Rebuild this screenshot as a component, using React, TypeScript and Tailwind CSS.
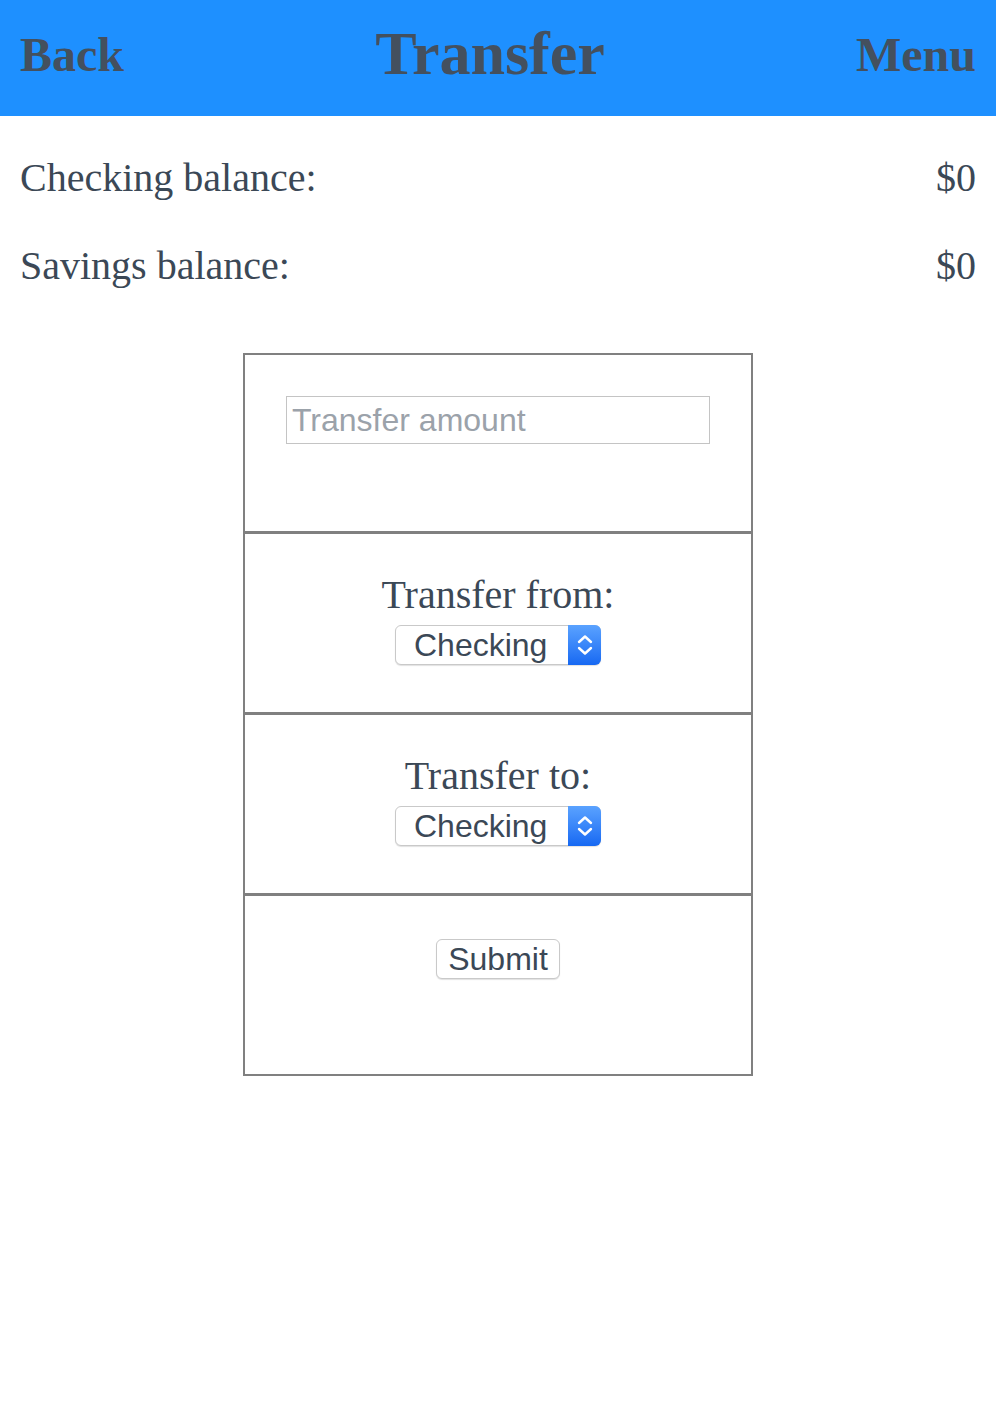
import React from "react";

function Chevrons() {
  return (
    <svg width="18" height="30" viewBox="0 0 18 30" fill="none">
      <path d="M3 12 L9 6.5 L15 12" stroke="white" strokeWidth="2.4" strokeLinecap="round" strokeLinejoin="round" />
      <path d="M3 18 L9 23.5 L15 18" stroke="white" strokeWidth="2.4" strokeLinecap="round" strokeLinejoin="round" />
    </svg>
  );
}

function MacSelect() {
  return (
    <div className="relative mx-auto h-[40px] w-[206px] rounded-[6px] border border-[#c9c9c9] bg-white shadow-[0_1px_1px_rgba(0,0,0,0.12)]">
      <select
        defaultValue="checking"
        className="h-full w-full appearance-none bg-transparent pl-[18px] pr-[36px] text-[32px] leading-[38px] text-[#3b4856] outline-none"
        style={{ fontFamily: '"Liberation Sans", Arial, sans-serif' }}
      >
        <option value="checking">Checking</option>
        <option value="savings">Savings</option>
      </select>
      <div className="pointer-events-none absolute right-[-1px] top-[-1px] flex h-[40px] w-[33px] items-center justify-center rounded-r-[6px] bg-gradient-to-b from-[#5aa2ff] to-[#1668f2]">
        <Chevrons />
      </div>
    </div>
  );
}

export default function App() {
  const serif = { fontFamily: '"Liberation Serif", "Times New Roman", serif' };
  const sans = { fontFamily: '"Liberation Sans", Arial, sans-serif' };
  return (
    <div className="min-h-[1402px] w-full bg-white text-[#3b4856]" style={serif}>
      <header className="flex h-[116px] items-center justify-between bg-[#1e90ff] px-[20px] text-[#44505e]">
        <span className="mt-[-7px] text-[48px] font-bold leading-[53px]">Back</span>
        <span className="mt-[-10px] text-[62px] font-bold leading-[68px]">Transfer</span>
        <span className="mt-[-7px] text-[48px] font-bold leading-[53px]">Menu</span>
      </header>

      <div className="flex flex-col gap-[42px] px-[20px] pt-[39px] text-[40px] leading-[46px]">
        <div className="flex justify-between">
          <span>Checking balance:</span>
          <span>$0</span>
        </div>
        <div className="flex justify-between">
          <span>Savings balance:</span>
          <span>$0</span>
        </div>
      </div>

      <div className="mx-auto mt-[64px] w-[510px] divide-y-[3px] divide-[#808080] border-2 border-[#808080]">
        <section className="h-[179px] pt-[41px]">
          <input
            type="text"
            placeholder="Transfer amount"
            className="mx-auto block h-[48px] w-[424px] border border-[#c4c4c4] px-[5px] text-[32px] text-[#3b4856] outline-none placeholder:text-[#9ba2aa]"
            style={sans}
          />
        </section>
        <section className="h-[181px] pt-[38px] text-center">
          <div className="text-[40px] leading-[46px]">Transfer from:</div>
          <div className="mt-[7px]">
            <MacSelect />
          </div>
        </section>
        <section className="h-[181px] pt-[38px] text-center">
          <div className="text-[40px] leading-[46px]">Transfer to:</div>
          <div className="mt-[7px]">
            <MacSelect />
          </div>
        </section>
        <section className="h-[178px] pt-[43px] text-center">
          <button
            type="button"
            className="mx-auto block h-[40px] w-[124px] rounded-[6px] border border-[#c9c9c9] bg-white text-[32px] leading-[38px] text-[#3b4856] shadow-[0_1px_1px_rgba(0,0,0,0.12)]"
            style={sans}
          >
            Submit
          </button>
        </section>
      </div>
    </div>
  );
}
